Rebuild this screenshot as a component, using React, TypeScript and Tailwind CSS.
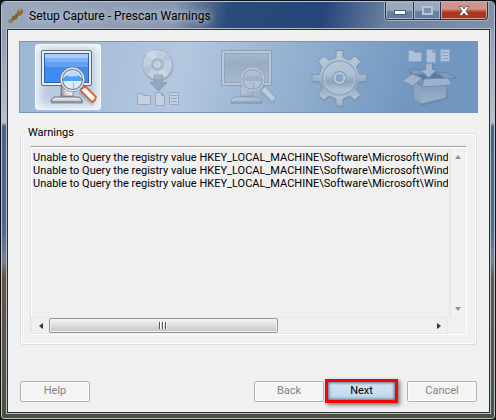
import { ReactNode } from 'react';

const warnings = [
  { id: 1, text: 'Unable to Query the registry value HKEY_LOCAL_MACHINE\\Software\\Microsoft\\Windo' },
  { id: 2, text: 'Unable to Query the registry value HKEY_LOCAL_MACHINE\\Software\\Microsoft\\Windo' },
  { id: 3, text: 'Unable to Query the registry value HKEY_LOCAL_MACHINE\\Software\\Microsoft\\Windo' },
];

const StepIcon = ({ children }: { children: ReactNode }) => (
  <svg viewBox="0 0 66 66" className="h-[66px] w-[66px]" aria-hidden="true">
    {children}
  </svg>
);

// shared gradients for every step drawing
const IconDefs = () => (
  <svg className="absolute h-0 w-0" aria-hidden="true">
    <defs>
      <linearGradient id="silver" x1="0" y1="0" x2="1" y2="1">
        <stop offset="0" stopColor="#c8d4e1" />
        <stop offset="1" stopColor="#99acc2" />
      </linearGradient>
      <linearGradient id="gearFill" x1="0" y1="0" x2="0" y2="1">
        <stop offset="0" stopColor="#bccbdb" />
        <stop offset="0.4" stopColor="#b2c3d5" />
        <stop offset="0.62" stopColor="#8fa4bb" />
        <stop offset="0.85" stopColor="#b5c6d9" />
        <stop offset="1" stopColor="#9db2c9" />
      </linearGradient>
      <linearGradient id="dullScreen" x1="0" y1="0" x2="0" y2="1">
        <stop offset="0" stopColor="#a9b8ca" />
        <stop offset="0.35" stopColor="#9aabc0" />
        <stop offset="1" stopColor="#a9bacd" />
      </linearGradient>
      <linearGradient id="metal" x1="0" y1="0" x2="1" y2="0">
        <stop offset="0" stopColor="#8e8e8e" />
        <stop offset="0.4" stopColor="#d8d8d8" />
        <stop offset="1" stopColor="#f8f8f8" />
      </linearGradient>
      <linearGradient id="base" x1="0" y1="0" x2="0" y2="1">
        <stop offset="0" stopColor="#f6f6f6" />
        <stop offset="1" stopColor="#b9b9b9" />
      </linearGradient>
      <linearGradient id="boxFront" x1="0" y1="0" x2="0" y2="1">
        <stop offset="0" stopColor="#7f99b9" />
        <stop offset="1" stopColor="#a3b6cb" />
      </linearGradient>
    </defs>
  </svg>
);

const MonitorIcon = ({ active = false }: { active?: boolean }) => {
  const line = active ? '#666a70' : '#889cb3';
  return (
    <StepIcon>
      <path d="M26 43h12v9c1 2 9 1 10 6v2H16v-2c1-5 9-4 10-6z" fill="#4f6680" opacity="0.3" />
      <path d="M26 42h12v10H26z" fill={active ? 'url(#metal)' : 'url(#silver)'} stroke={line} strokeWidth="0.7" />
      <path d="M21 53h21c3 0 5 2 5 5H16c0-3 2-5 5-5z" fill={active ? 'url(#base)' : 'url(#silver)'} stroke={line} />
      <rect x="6.5" y="6.5" width="50" height="35" rx="1.5" fill={active ? '#eeeeed' : '#bccadb'} stroke={line} />
      <rect x="9.5" y="9.5" width="44" height="29" fill={active ? '#3f8af5' : 'url(#dullScreen)'} stroke={active ? '#2b61b4' : '#8fa3b9'} />
      {active && (
        <>
          <rect x="10" y="10" width="43" height="4" fill="#a6cdfb" />
          <rect x="10" y="14" width="43" height="4" fill="#7eaff7" />
          <rect x="10" y="18" width="43" height="5" fill="#629ff5" />
        </>
      )}
      <path d="M47 43l14 14-4 5-14-13z" fill={line} opacity="0.25" />
      <path
        d="M46.500 44.500l4-2L61 53l-1 3-3 2-11-11z"
        fill={active ? '#f6e9df' : '#b5c5d6'}
        stroke={active ? '#cb5a29' : '#879bb3'}
        strokeWidth={active ? 1.6 : 1}
      />
      <path d="M49 45.500l8.500 8.500" stroke={active ? '#ffffff' : '#c7d3e0'} strokeWidth="2" />
      <circle cx="37.5" cy="35.5" r="11" fill={active ? '#d8edff' : '#b5c5d7'} />
      <path d="M27 37a11 11 0 0 1 21 0z" fill={active ? '#559ef5' : '#9fb1c6'} />
      <path d="M30 31q7-8 15 0q-7 3-15 0z" fill={active ? '#b6dcff' : '#aebfd1'} />
      <path d="M38.500 39v6" stroke={active ? '#a5b2bd' : '#91a5bb'} />
      <circle cx="37.500" cy="35.500" r="11" fill="none" stroke={active ? '#737a83' : '#889cb3'} strokeWidth="3" />
      <circle cx="37.500" cy="35.500" r="11.200" fill="none" stroke={active ? '#dce1e5' : '#c0cddc'} strokeWidth="1.400" />
    </StepIcon>
  );
};

// folder, blank page and text page in one row
const FileRow = ({ fill }: { fill: string }) => (
  <g fill={fill} stroke="#92a7bf">
    <path d="M12.500 17.500v-11h5l1 2h7v9z" />
    <path d="M30.500 18.500v-13h6l3 3v10z" />
    <path d="M36.500 5.500v3h3" fill="#8fa5bf" />
    <path d="M44.500 5.500h9v12h-9z" />
    <path d="M46 8.500h6M46 11.500h6M46 14.500h6" />
  </g>
);

const DiscIcon = () => (
  <StepIcon>
    <circle cx="33" cy="22" r="15.500" fill="#7890ac" opacity="0.5" />
    <circle cx="32.500" cy="20.500" r="15" fill="#c3d0df" stroke="#a0b2c7" />
    <path d="M32.500 20.500L21 10a15 15 0 0 1 9-4zM32.500 20.500l11 10a15 15 0 0 1-8 4z" fill="#d1dce7" />
    <path d="M32.500 20.500l10-11a15 15 0 0 1 4 6zM32.500 20.500l-11 10a15 15 0 0 1-4-7z" fill="#afc0d2" opacity="0.7" />
    <circle cx="32.500" cy="20.500" r="5.500" fill="#b6c5d5" stroke="#9bafc5" strokeWidth="1.500" />
    <circle cx="32.500" cy="20.500" r="2.200" fill="#b4c9e0" stroke="#e0e7ef" />
    <path d="M29.500 31h8v7.500h4.500L33.500 47 25 38.500h4.500z" fill="#8fa3ba" stroke="#8299b2" />
    <path d="M30 30h7v5h-7z" fill="#b3c2d2" opacity="0.6" />
    <g transform="translate(0 43)">
      <FileRow fill="#c8d3e0" />
    </g>
  </StepIcon>
);

const GearIcon = () => (
  <StepIcon>
    {['#607a98', 'url(#gearFill)'].map((fill, i) => (
      <path
        key={fill}
        transform={i === 0 ? 'translate(0.500 1.500)' : undefined}
        opacity={i === 0 ? 0.4 : 1}
        fill={fill}
        stroke="#8095af"
        strokeLinejoin="round"
        d="M30 6.500h7v7l6.500 2.500 5.500-4 5.500 5.500-4 5.500 3 7.500h7v7h-7l-3 7.500 4 5.500-5.500 5.500-5.500-4-6.500 3v7h-7v-7l-7-3-5.500 4-5.500-5.500 4-5.500-3-7.500H6v-7h7l3-7.500-4-5.500 5.500-5.500 5.500 4 7-2.500z"
      />
    ))}
    <circle cx="33.500" cy="34" r="17" fill="url(#gearFill)" stroke="#94a8bf" strokeWidth="1.500" />
    <circle cx="33.500" cy="34" r="15.500" fill="none" stroke="#bdccdc" />
    <circle cx="33.500" cy="34" r="7" fill="#7e94ae" />
    <circle cx="33.500" cy="34" r="5" fill="#88a7ca" stroke="#c0cfdf" strokeWidth="2" />
  </StepIcon>
);

const PackageIcon = () => (
  <StepIcon>
    <path d="M18 55l8 7 26-7-1-12z" fill="#536f92" opacity="0.35" />
    <path d="M13 25l15 1 11 2 13 7-24 1-13-5z" fill="#587499" />
    <path d="M13 25l14 1 2 4-12 1z" fill="#829bb9" stroke="#6884a6" />
    <path d="M38 28l14 1 8 5-9 1z" fill="#829cbc" stroke="#6883a5" />
    <path d="M17 37l9 5 25-2-1 14-25 6-7-5z" fill="url(#boxFront)" stroke="#7590b0" />
    <path d="M18 40l7 3v16l-6-4z" fill="#91a7c0" />
    <path d="M16 30l10 4-9 8-11-5z" fill="#a3b7cd" stroke="#7790af" />
    <path d="M28 35l24-1 4 7-30 2z" fill="#a3b7cd" stroke="#7790af" />
    <path d="M29.500 19h7v6.500H41L32.500 34 24 25.500h5.500z" fill="#a6b9cf" stroke="#6f88a7" />
    <FileRow fill="#b4c7dd" />
  </StepIcon>
);

const CaptureIcon = () => (
  <svg viewBox="0 0 16 16" className="h-4 w-4" aria-hidden="true">
    <path d="M2 14L13 3" stroke="#6d6045" strokeWidth="2.500" />
    <path d="M9 3l3-2 3 1v3l-3 3-3-1z" fill="#8c6936" />
    <path d="M4 8l3-2 3 2-1 3-3 1-2-2z" fill="#80602f" />
    <path d="M0 13l2-2 3 1-1 3H1z" fill="#9b7b46" />
    <path d="M11 3l2-1M5 8l2-1" stroke="#d5b878" />
  </svg>
);

const captionClass =
  'flex items-center justify-center border-r border-[#26364f] bg-linear-to-b from-[#9aa9bf] from-45% to-[#637fa1] to-60% shadow-[inset_0_0_0_1px_#a8b4c7]';

const buttonClass =
  'h-[21px] w-[70px] rounded-[2px] border border-[#adb2b5] bg-[#f4f4f4] text-[11px] leading-4 text-[#838383] shadow-[inset_0_0_0_1px_#fbfbfb]';

const TitleBar = () => (
  <header className="mx-px mt-px flex h-[27px] items-start rounded-t-[5px] bg-[linear-gradient(100deg,#9aa8bc,#8796ae_35%,#2a4b7b_46%,#26457a_65%,#6b80a1_78%,#8292ab)]">
    <div className="flex h-full items-center gap-[5px] pl-[6px]">
      <CaptureIcon />
      <h1 className="text-[12px] leading-4 text-black [text-shadow:0_0_6px_#c5cedb,0_0_10px_#c5cedb]">
        Setup Capture - Prescan Warnings
      </h1>
    </div>
    <div className="mr-[6px] ml-auto flex h-[18px] overflow-hidden rounded-b-[4px] border border-t-0 border-[#26364f] shadow-[0_0_0_1px_#a2afc2]">
      <button aria-label="Minimize" className={`${captionClass} w-[28px]`}>
        <span className="mt-1 h-[5px] w-3 border border-[#54627a] bg-white" />
      </button>
      <button aria-label="Maximize" disabled className={`${captionClass} w-[27px]`}>
        <span className="h-[9px] w-[11px] border-2 border-[#b5c3d6] bg-[#7c91ae]" />
      </button>
      <button
        aria-label="Close"
        className="flex w-[46px] items-center justify-center bg-linear-to-b from-[#cf9389] from-40% to-[#ae361f] to-60% shadow-[inset_0_0_0_1px_#d6a096]"
      >
        <svg viewBox="0 0 12 10" className="h-[10px] w-3" aria-hidden="true">
          <path d="M1 .5h3l2 2.500 2-2.500h3L8 5l3 4.500H8L6 7 4 9.500H1L4 5z" fill="#fff" stroke="#5c5458" strokeWidth="0.800" />
        </svg>
      </button>
    </div>
  </header>
);

const steps = [
  { name: 'Prescan', icon: <MonitorIcon active />, active: true },
  { name: 'Install', icon: <DiscIcon /> },
  { name: 'Postscan', icon: <MonitorIcon /> },
  { name: 'Configure', icon: <GearIcon /> },
  { name: 'Package', icon: <PackageIcon /> },
];

const StepBanner = () => (
  <ol className="grid grid-cols-5 border border-[#7396bf] bg-linear-[105deg] from-[#9cb6d5] via-[#b4c7df] via-35% to-[#7197c0] to-85% px-[3px] py-[2px]">
    {steps.map((s) => (
      <li key={s.name} aria-label={s.name} className="flex justify-center">
        <span
          className={
            s.active
              ? 'rounded-[4px] bg-[#b9cbe0] shadow-[inset_0_0_0_1px_#f3f7fb,inset_0_0_9px_5px_#f0f5fa]'
              : 'opacity-90'
          }
        >
          {s.icon}
        </span>
      </li>
    ))}
  </ol>
);

const Arrow = ({ d, fill }: { d: string; fill: string }) => (
  <svg viewBox="0 0 8 8" className="h-2 w-2" aria-hidden="true">
    <path d={d} fill={fill} />
  </svg>
);

const WarningList = () => (
  <div className="grid min-h-0 flex-1 grid-cols-[minmax(0,1fr)_18px] grid-rows-[minmax(0,1fr)_17px] border border-t-[#a0a0a0] border-r-white border-b-white border-l-[#e3e3e3] pt-px shadow-[inset_1px_1px_0_#fff]">
    <ul className="overflow-hidden py-[3px] pl-[2px]">
      {warnings.map((w) => (
        <li key={w.id} className="text-[11px] leading-[13px] whitespace-nowrap">
          {w.text}
        </li>
      ))}
    </ul>
    <div className="mr-px ml-px flex flex-col justify-between border-l-2 border-[#e6e6e6] bg-[#f1f1f1]">
      <button aria-label="Scroll up" disabled className="flex h-[17px] items-center justify-center">
        <Arrow d="M1 6l3-4 3 4z" fill="#8f8f8f" />
      </button>
      <button aria-label="Scroll down" disabled className="flex h-[17px] items-center justify-center">
        <Arrow d="M1 2h6L4 6z" fill="#8f8f8f" />
      </button>
    </div>
    <div className="flex border border-[#e9e9e9] bg-[#f0f0f0]">
      <button aria-label="Scroll left" className="flex w-[17px] shrink-0 items-center justify-center">
        <Arrow d="M6 1v6L2 4z" fill="#333" />
      </button>
      <div className="flex-1">
        <div className="flex h-[15px] w-3/5 items-center justify-center gap-px rounded-[2px] border border-[#979797] bg-linear-to-b from-[#f5f5f5] via-[#dddddd] via-50% to-[#c3c4c6] shadow-[inset_0_0_0_1px_#f0f0f0]">
          <span className="h-[7px] w-[2px] border-r border-white bg-[#555]" />
          <span className="h-[7px] w-[2px] border-r border-white bg-[#555]" />
          <span className="h-[7px] w-[2px] border-r border-white bg-[#555]" />
        </div>
      </div>
      <button aria-label="Scroll right" className="flex w-[17px] shrink-0 items-center justify-center">
        <Arrow d="M2 1l4 3-4 3z" fill="#333" />
      </button>
    </div>
  </div>
);

export default function App() {
  return (
    <div className="h-screen bg-[#11151c] font-[Roboto,'Liberation_Sans',sans-serif] text-black">
      <div className="flex h-full flex-col rounded-t-[6px] rounded-b-[4px] border border-[#11151c] bg-[linear-gradient(#8292ab,#b7c1cd_29%,#486489_30%,#4d6a90_55%,#7b8391_62%,#6b5243_66%,#5f5245_85%,#4c5138)] shadow-[inset_0_0_0_1px_#b7c1cf]">
        <TitleBar />
        <main className="mr-[5px] mb-[6px] ml-[6px] flex min-h-0 flex-1 flex-col border border-[#26303d] bg-[#f0f0f0] p-[11px] pb-[9px] shadow-[0_0_0_1px_#b3becb]">
          <StepBanner />
          <fieldset className="mx-px mt-3 flex min-h-0 flex-1 flex-col rounded-[3px] border border-[#d5dfe5] px-[9px] pt-[5px] pb-[9px] shadow-[inset_0_0_0_1px_#fff]">
            <legend className="-ml-[5px] px-[3px] text-[11px] leading-4">Warnings</legend>
            <WarningList />
          </fieldset>
          <div className="mt-[34px] flex items-center px-px">
            <button disabled className={buttonClass}>Help</button>
            <button disabled className={`${buttonClass} ml-auto`}>Back</button>
            <button className="ml-px h-6 w-[73px] border-3 border-[#fb0007] bg-linear-to-b from-[#d6e7f4] to-[#b9d6ea] text-[11px] leading-4 shadow-[inset_0_0_3px_1px_#5d7188,2px_2px_4px_#777]">
              Next
            </button>
            <button disabled className={`${buttonClass} ml-[9px]`}>Cancel</button>
          </div>
        </main>
      </div>
      <IconDefs />
    </div>
  );
}
